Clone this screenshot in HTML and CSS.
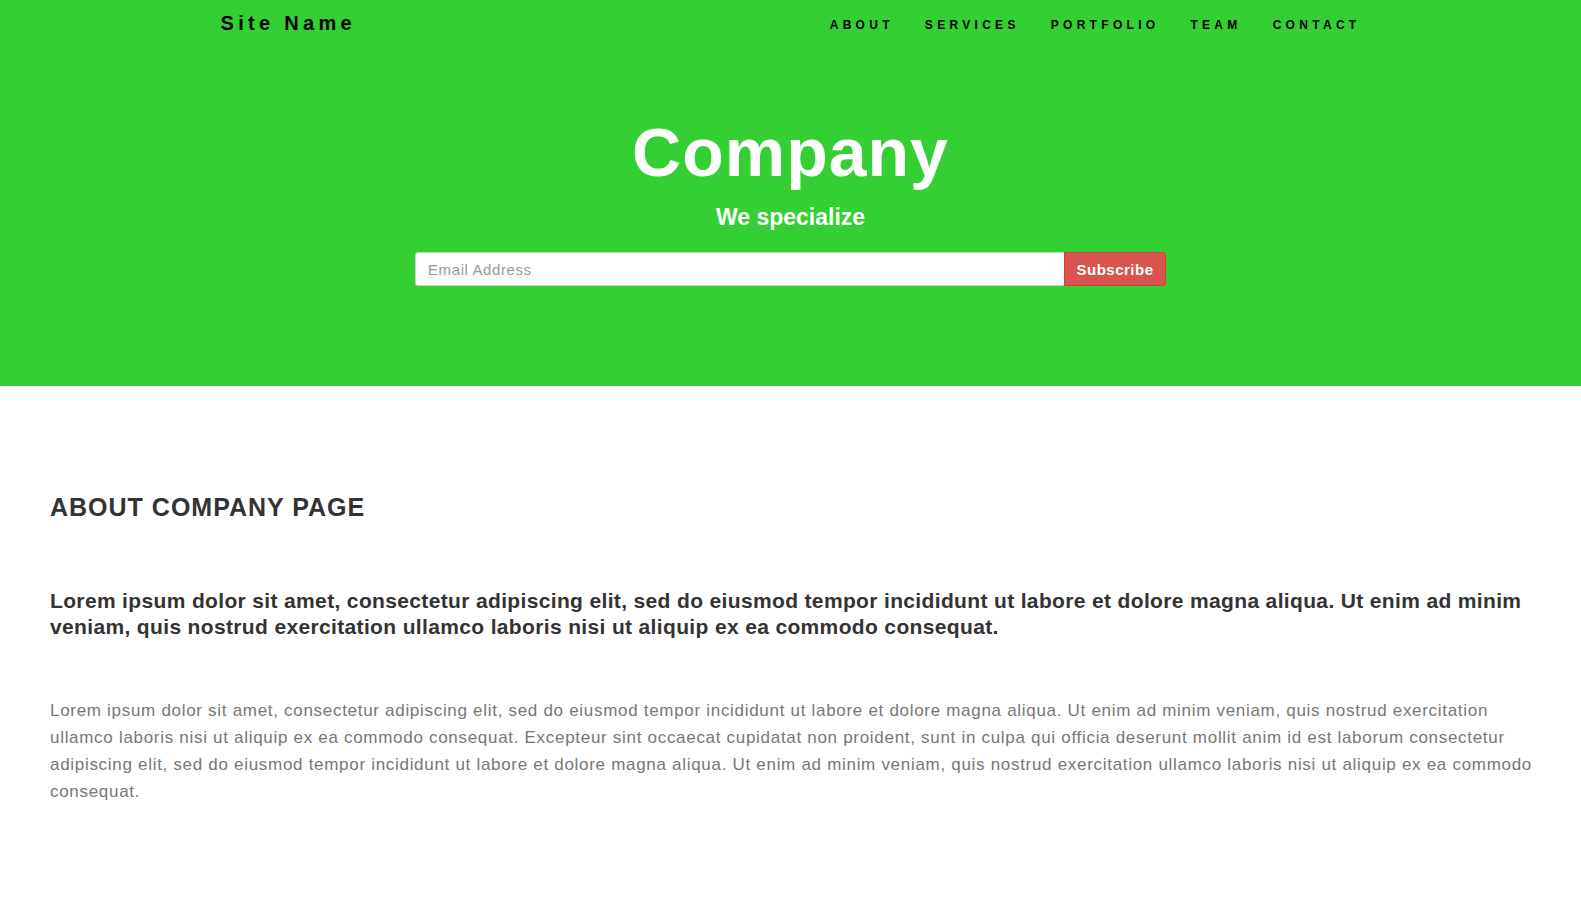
FILE: index.html
```html
<!DOCTYPE html>
<html>
<head>
<meta charset="utf-8">
<title>Company</title>
<link rel="stylesheet" href="styles.css">
</head>
<body>
<header class="hero">
  <nav class="topbar">
    <a class="brand" href="#">Site Name</a>
    <ul class="menu">
      <li><a href="#">About</a></li>
      <li><a href="#">Services</a></li>
      <li><a href="#">Portfolio</a></li>
      <li><a href="#">Team</a></li>
      <li><a href="#">Contact</a></li>
    </ul>
  </nav>
  <div class="intro">
    <h1 class="title">Company</h1>
    <p class="tagline">We specialize</p>
    <form class="signup">
      <input class="email" type="text" placeholder="Email Address">
      <button class="subscribe" type="button">Subscribe</button>
    </form>
  </div>
</header>
<main class="about">
  <h2 class="about-title">About Company Page</h2>
  <p class="lead">Lorem ipsum dolor sit amet, consectetur adipiscing elit, sed do eiusmod tempor incididunt ut labore et dolore magna aliqua. Ut enim ad minim veniam, quis nostrud exercitation ullamco laboris nisi ut aliquip ex ea commodo consequat.</p>
  <p class="body-text">Lorem ipsum dolor sit amet, consectetur adipiscing elit, sed do eiusmod tempor incididunt ut labore et dolore magna aliqua. Ut enim ad minim veniam, quis nostrud exercitation ullamco laboris nisi ut aliquip ex ea commodo consequat. Excepteur sint occaecat cupidatat non proident, sunt in culpa qui officia deserunt mollit anim id est laborum consectetur adipiscing elit, sed do eiusmod tempor incididunt ut labore et dolore magna aliqua. Ut enim ad minim veniam, quis nostrud exercitation ullamco laboris nisi ut aliquip ex ea commodo consequat.</p>
</main>
</body>
</html>
```

FILE: styles.css
```css
* { box-sizing: border-box; }
html, body { margin: 0; padding: 0; }
body {
  font-family: "Liberation Sans", Arial, sans-serif;
  background: #fff;
  color: #333;
}
.hero {
  background: #33cf33;
  height: 386px;
}
.topbar {
  width: 1140px;
  margin: 0 auto;
  height: 48px;
  display: flex;
  align-items: center;
  justify-content: space-between;
}
.brand {
  color: #000;
  text-decoration: none;
  font-size: 20px;
  font-weight: bold;
  letter-spacing: 4.3px;
  margin-top: -1px;
}
.menu {
  list-style: none;
  margin: 0;
  padding: 0;
  display: flex;
  gap: 31px;
}
.menu a {
  color: #000;
  text-decoration: none;
  text-transform: uppercase;
  font-size: 12px;
  font-weight: bold;
  letter-spacing: 4.3px;
}
.intro {
  display: flex;
  flex-direction: column;
  align-items: center;
  padding-top: 62px;
}
.title {
  margin: 0;
  color: #fff;
  font-size: 68px;
  font-weight: bold;
  line-height: 84px;
  letter-spacing: 1px;
}
.tagline {
  margin: 8px 0 0;
  color: #fff;
  font-size: 23px;
  font-weight: bold;
  line-height: 30px;
}
.signup {
  display: flex;
  width: 751px;
  margin-top: 20px;
}
.email {
  flex: 1;
  height: 34px;
  border: 1px solid #ccc;
  border-right: none;
  border-radius: 3px 0 0 3px;
  padding: 0 12px;
  font-family: inherit;
  font-size: 15px;
  letter-spacing: 0.6px;
  color: #555;
}
.email::placeholder { color: #999; }
.subscribe {
  width: 102px;
  height: 34px;
  border: 1px solid #d43f3a;
  border-radius: 0 3px 3px 0;
  background: #d9534f;
  color: #fff;
  font-family: inherit;
  font-size: 15px;
  letter-spacing: 0.5px;
  font-weight: bold;
}
.about {
  padding: 106px 38px 60px 50px;
}
.about-title {
  margin: 0;
  font-size: 25px;
  font-weight: bold;
  letter-spacing: 1px;
  text-transform: uppercase;
  color: #333;
  line-height: 30px;
}
.lead {
  margin: 66px 12px 0 0;
  font-size: 21px;
  font-weight: bold;
  letter-spacing: 0.35px;
  line-height: 26px;
  color: #333;
}
.body-text {
  margin: 57px 0 0;
  font-size: 17px;
  letter-spacing: 0.7px;
  line-height: 27px;
  color: #777;
}
```
